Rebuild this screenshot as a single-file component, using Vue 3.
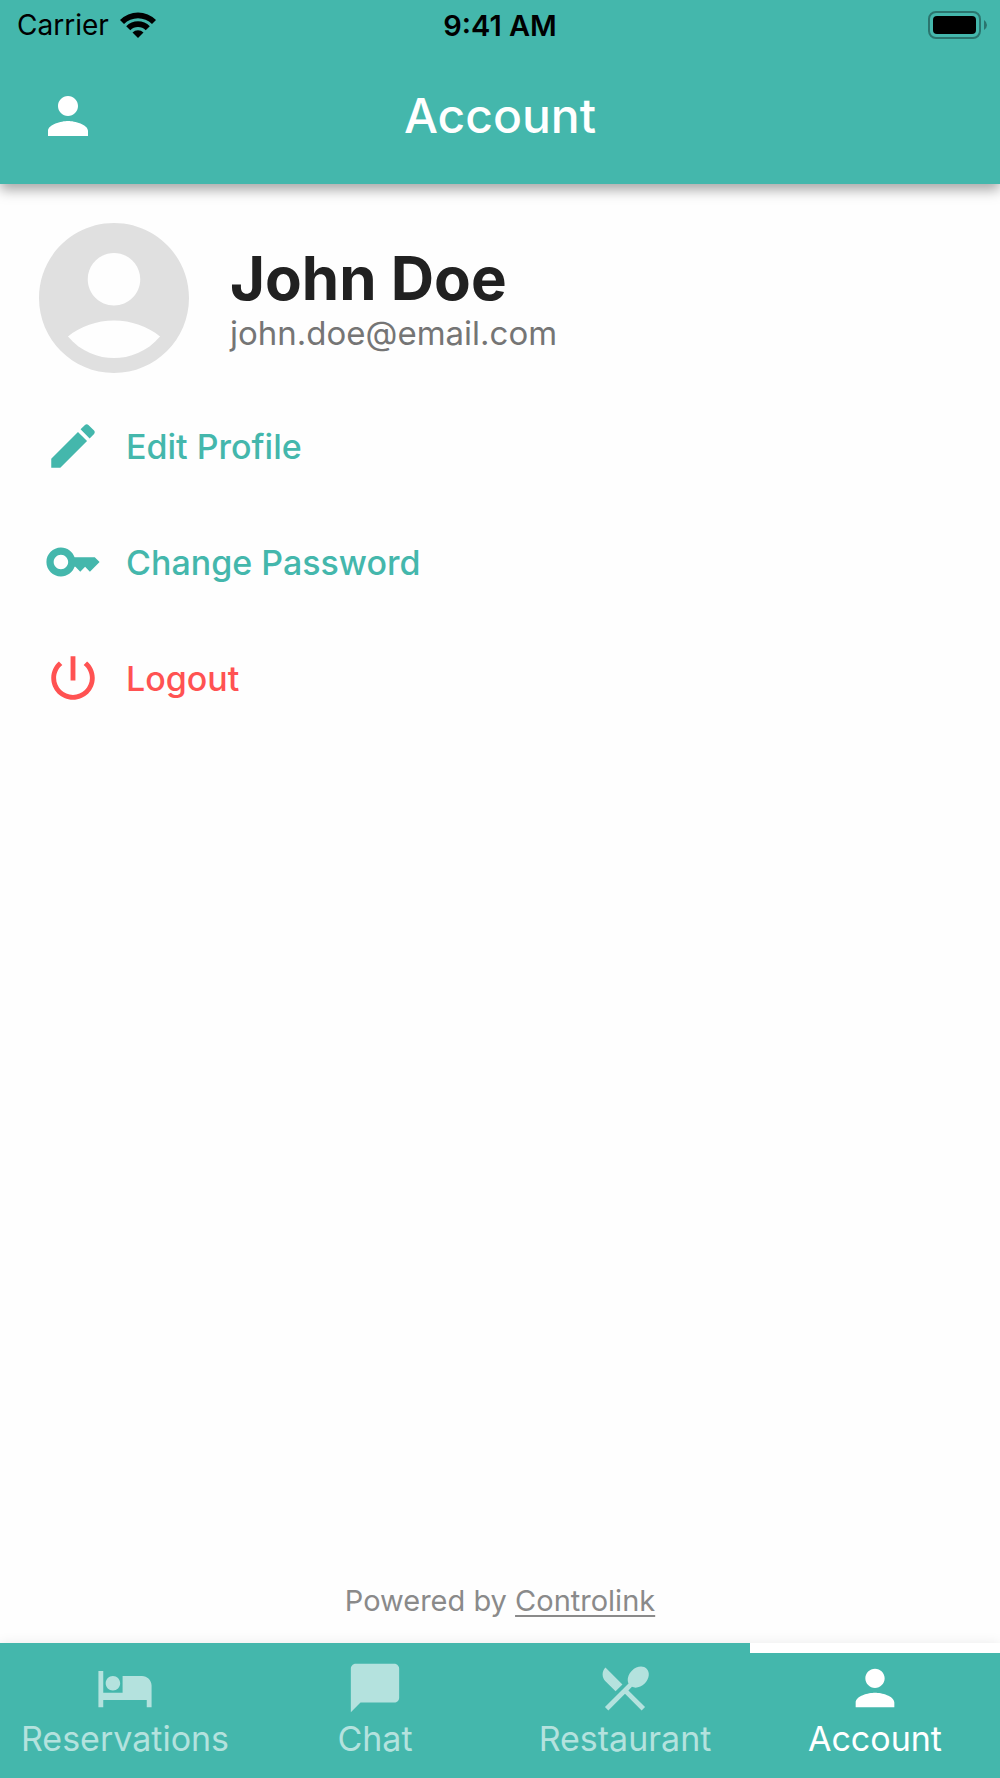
<template>
  <div class="account-page">
    <header class="app-header">
      <div class="status-bar">
        <div class="carrier">
          <span>Carrier</span>
          <svg class="wifi" viewBox="0 0 38 28" aria-hidden="true">
            <path d="M1 9 A25.5 25.5 0 0 1 37 9 L33 13 A19.8 19.8 0 0 0 5 13 Z" />
            <path d="M7.200 15.200 A16.700 16.700 0 0 1 30.800 15.200 L26.700 19.300 A10.900 10.900 0 0 0 11.300 19.300 Z" />
            <path d="M13.500 21.500 A7.800 7.800 0 0 1 24.500 21.500 L19 27 Z" />
          </svg>
        </div>
        <span class="clock">9:41 AM</span>
        <div class="battery">
          <div class="battery-body"><div class="battery-level"></div></div>
          <svg class="battery-cap" viewBox="0 0 3 10" aria-hidden="true">
            <path d="M0 0 Q3 2 3 5 T0 10 Z" />
          </svg>
        </div>
      </div>

      <div class="title-bar">
        <button class="profile-btn" aria-label="Profile">
          <svg viewBox="0 0 24 24"><path :d="icons.person" /></svg>
        </button>
        <h1>Account</h1>
      </div>
    </header>

    <main class="content">
      <section class="profile">
        <svg class="avatar" viewBox="0 0 24 24" aria-hidden="true"><path :d="icons.avatar" /></svg>
        <div class="profile-info">
          <h2>{{ user.name }}</h2>
          <p>{{ user.email }}</p>
        </div>
      </section>

      <div class="actions">
        <button
          v-for="action in actions"
          :key="action.label"
          class="action"
          :class="{ danger: action.danger }"
        >
          <svg viewBox="0 0 24 24" aria-hidden="true"><path :d="icons[action.icon]" /></svg>
          <span>{{ action.label }}</span>
        </button>
      </div>

      <p class="powered">Powered by <a href="#">Controlink</a></p>
    </main>

    <nav class="tab-bar">
      <button
        v-for="tab in tabs"
        :key="tab.label"
        class="tab"
        :class="{ active: activeTab === tab.label }"
        @click="activeTab = tab.label"
      >
        <svg viewBox="0 0 24 24" aria-hidden="true"><path :d="icons[tab.icon]" /></svg>
        <span>{{ tab.label }}</span>
      </button>
    </nav>
  </div>
</template>

<script setup>
import { ref } from 'vue'

const user = {
  name: 'John Doe',
  email: 'john.doe@email.com',
}

const actions = [
  { label: 'Edit Profile', icon: 'edit' },
  { label: 'Change Password', icon: 'key' },
  { label: 'Logout', icon: 'power', danger: true },
]

const tabs = [
  { label: 'Reservations', icon: 'bed' },
  { label: 'Chat', icon: 'chat' },
  { label: 'Restaurant', icon: 'dining' },
  { label: 'Account', icon: 'person' },
]
const activeTab = ref('Account')

const icons = {
  person: 'M12 12c2.21 0 4-1.79 4-4s-1.79-4-4-4-4 1.79-4 4 1.79 4 4 4zm0 2c-2.67 0-8 1.34-8 4v2h16v-2c0-2.66-5.33-4-8-4z',
  avatar: 'M12 2C6.48 2 2 6.48 2 12s4.48 10 10 10 10-4.48 10-10S17.52 2 12 2zM12 6c1.93 0 3.5 1.57 3.5 3.5S13.93 13 12 13s-3.5-1.57-3.5-3.5S10.07 6 12 6zM12 20c-2.03 0-4.43-.82-6.14-2.88C7.55 15.8 9.68 15 12 15s4.45.8 6.14 2.12C16.43 19.18 14.03 20 12 20z',
  edit: 'M3 17.25V21h3.75L17.81 9.94l-3.75-3.75L3 17.25zM20.71 7.04c.39-.39.39-1.02 0-1.41l-2.34-2.34c-.39-.39-1.02-.39-1.41 0l-1.83 1.83 3.75 3.75 1.83-1.83z',
  key: 'M21 10h-8.35C11.83 7.67 9.61 6 7 6c-3.31 0-6 2.69-6 6s2.69 6 6 6c2.61 0 4.83-1.67 5.65-4H13l2 2 2-2 2 2 4-4.04L21 10zM7 15c-1.65 0-3-1.35-3-3s1.35-3 3-3 3 1.35 3 3-1.35 3-3 3z',
  power: 'M13 3h-2v10h2V3zm4.83 2.17l-1.42 1.42C17.99 7.86 19 9.81 19 12c0 3.87-3.13 7-7 7s-7-3.13-7-7c0-2.19 1.01-4.14 2.58-5.42L6.17 5.17C4.23 6.82 3 9.26 3 12c0 4.97 4.03 9 9 9s9-4.03 9-9c0-2.74-1.23-5.18-3.17-6.83z',
  bed: 'M7 13c1.66 0 3-1.34 3-3S8.66 7 7 7s-3 1.34-3 3 1.34 3 3 3zm12-6h-8v7H3V5H1v15h2v-3h18v3h2v-9c0-2.21-1.79-4-4-4z',
  chat: 'M20 2H4c-1.1 0-2 .9-2 2v18l4-4h14c1.1 0 2-.9 2-2V4c0-1.1-.9-2-2-2z',
  dining: 'M8.1 13.34l2.83-2.83L3.91 3.5c-1.56 1.56-1.56 4.09 0 5.66l4.19 4.18zm6.78-1.81c1.53.71 3.68.21 5.27-1.38 1.91-1.91 2.28-4.65.81-6.12-1.46-1.46-4.2-1.1-6.12.81-1.59 1.59-2.09 3.74-1.38 5.27L3.7 19.87l1.41 1.41L12 14.41l6.88 6.88 1.41-1.41L13.41 13l1.47-1.47z',
}
</script>

<style>
body { background: #fefefe; }
</style>

<style scoped>
.account-page {
  min-height: 100vh;
  display: flex;
  flex-direction: column;
  font-family: Inter, "Liberation Sans", sans-serif;
  color: #212121;
}
h1, h2, p { margin: 0; }
svg { display: block; fill: currentColor; }
button {
  border: none;
  background: none;
  padding: 0;
  font-family: inherit;
  color: inherit;
  cursor: pointer;
}

.app-header {
  background: #44b7ac;
  box-shadow: 0 6px 12px rgba(0,0,0,0.34);
}
.status-bar {
  display: grid;
  grid-template-columns: 1fr auto 1fr;
  align-items: center;
  height: 50px;
  padding: 0 13px;
  box-sizing: border-box;
  color: #000;
  font-size: 28px;
}
.carrier { display: flex; align-items: center; gap: 10px; padding-left: 4px; }
.wifi { width: 38px; height: 28px; }
.clock { font-size: 29px; font-weight: 600; }
.battery {
  display: flex;
  align-items: center;
  justify-content: flex-end;
  gap: 3px;
}
.battery-body {
  width: 53px;
  height: 28px;
  padding: 3px;
  box-sizing: border-box;
  border: 2px solid #2b756e;
  border-radius: 8px;
}
.battery-level { height: 100%; background: #000; border-radius: 4px; }
.battery-cap { width: 3px; height: 10px; color: #2b756e; }

.title-bar {
  display: grid;
  grid-template-columns: 1fr auto 1fr;
  align-items: center;
  height: 134px;
  padding: 0 38px 2px;
  box-sizing: border-box;
  color: #fff;
}
.profile-btn { justify-self: start; }
.profile-btn svg { width: 60px; height: 60px; }
.title-bar h1 { font-size: 48px; font-weight: 500; line-height: 60px; }

.content {
  flex: 1;
  display: flex;
  flex-direction: column;
  padding: 24px 24px 22px;
}
.profile { display: flex; align-items: center; gap: 26px; }
.avatar { flex: none; width: 180px; height: 180px; color: #e0e0e0; }
.profile-info { padding-top: 2px; }
.profile-info h2 { font-size: 60px; font-weight: 700; line-height: 68px; }
.profile-info p { font-size: 33px; line-height: 42px; color: #757575; }

.actions {
  display: flex;
  flex-direction: column;
  align-items: flex-start;
}
.action {
  display: flex;
  align-items: center;
  gap: 24px;
  height: 116px;
  padding: 0 20px;
  color: #44b7ac;
  font-size: 34px;
  font-weight: 500;
}
.action svg { width: 58px; height: 58px; }
.action.danger { color: #ff5252; }

.powered {
  margin-top: auto;
  text-align: center;
  font-size: 29px;
  line-height: 40px;
  color: #8a8a8a;
}
.powered a {
  color: inherit;
  text-decoration-thickness: 2px;
  text-underline-offset: 4px;
  text-decoration-skip-ink: none;
}

.tab-bar {
  display: grid;
  grid-template-columns: repeat(4, 1fr);
  height: 135px;
  background: #44b7ac;
  box-shadow: 0 0 12px rgba(0,0,0,0.08);
}
.tab {
  display: flex;
  flex-direction: column;
  align-items: center;
  padding-top: 6px;
  border-top: 10px solid transparent;
  color: #b4e2de;
  font-size: 34px;
  line-height: 44px;
}
.tab svg { width: 58px; height: 58px; }
.tab.active { border-top-color: #fff; color: #fff; }
</style>
